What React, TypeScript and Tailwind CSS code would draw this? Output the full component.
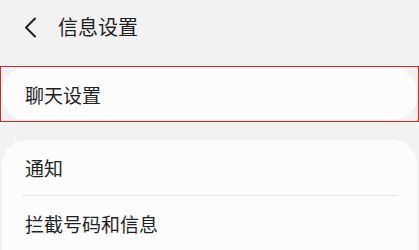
import React from "react";

export default function App() {
  return (
    <div
      className="w-[419px] h-[250px] overflow-hidden bg-[#f2f2f2] text-[#1f1f1f]"
      style={{ fontFamily: '"Noto Sans CJK SC", "Noto Sans", sans-serif' }}
    >
      <div className="h-[54px] flex items-center">
        <div className="w-[58px] flex items-center pl-[24px]">
          <svg width="13" height="21" viewBox="0 0 13 21" fill="none">
            <path d="M11 1.5 L2 10.5 L11 19.5" stroke="#1f1f1f" strokeWidth="2" strokeLinecap="round" strokeLinejoin="round" />
          </svg>
        </div>
        <span className="text-[20px] leading-none">信息设置</span>
      </div>
      <div className="mt-[12px] h-[56px] border-[1.5px] border-[#e2242b] flex">
        <div className="flex-1 mx-[1px] my-[1px] rounded-[24px] bg-[#fcfcfc] flex items-center pl-[23px]">
          <span className="text-[19px] leading-none">聊天设置</span>
        </div>
      </div>
      <div className="mt-[18px] mx-[2px] rounded-t-[24px] bg-[#fcfcfc]">
        <div className="h-[55px] flex items-center pl-[23px]">
          <span className="text-[19px] leading-none">通知</span>
        </div>
        <div className="mx-[20px] h-px bg-[#e6e6e6]" />
        <div className="h-[54px] flex items-center pl-[23px]">
          <span className="text-[19px] leading-none">拦截号码和信息</span>
        </div>
      </div>
    </div>
  );
}
